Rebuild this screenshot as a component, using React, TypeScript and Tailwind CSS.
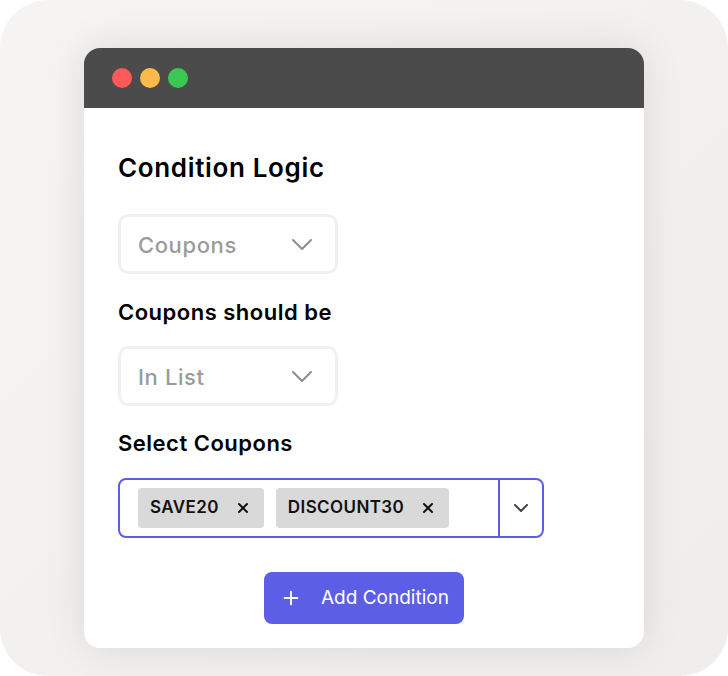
import { X, Plus } from "lucide-react";

// ─── Chevron drawn to the reference's proportions ─────────────────────────────

const Chevron = ({ w, h, className }: { w: number; h: number; className?: string }) => (
    <svg width={w} height={h} viewBox={`0 0 ${w} ${h}`} fill="none" className={className}>
        <polyline
            points={`1,1 ${w / 2},${h - 1} ${w - 1},1`}
            stroke="currentColor"
            strokeWidth={2}
            strokeLinecap="round"
            strokeLinejoin="round"
        />
    </svg>
);

// ─── Single select ────────────────────────────────────────────────────────────

const FakeSelect = ({ value }: { value: string }) => (
    <div className="flex items-center justify-between w-[220px] h-[60px] pl-[17px] pr-[23px] border-[3px] border-[#eff0f6] rounded-[10px] bg-white">
        <span className="text-[22px] text-[#9b9b9b] font-medium tracking-[0.6px] pt-[3px]">{value}</span>
        <Chevron w={20} h={11} className="text-[#8e8e8e]" />
    </div>
);

const Chip = ({ label }: { label: string }) => (
    <div className="flex items-center h-[40px] pl-[12px] pr-[13px] rounded-[4px] bg-[#d9d9d9]">
        <span className="text-[17px] font-semibold text-[#111] tracking-[0.4px]">{label}</span>
        <X className="w-[16px] h-[16px] ml-[16px] text-[#111]" strokeWidth={3} />
    </div>
);

// ─── Component ────────────────────────────────────────────────────────────────

export default function App() {
    return (
        <div className="w-[728px] h-[676px] bg-white" style={{ fontFamily: "Inter, 'Noto Sans', sans-serif" }}>
            <div className="w-full h-full rounded-[48px] bg-gradient-to-br from-[#f5f4f2] to-[#efeeec] pt-[48px] pl-[84px]">
                <div className="w-[560px] h-[600px] rounded-[16px] bg-white overflow-hidden shadow-[0_0_40px_rgba(0,0,0,0.10)]">
                    <div className="h-[60px] bg-[#4b4b4b] flex items-center gap-[8px] pl-[28px]">
                        <span className="w-[20px] h-[20px] rounded-full bg-[#fe5a5b]" />
                        <span className="w-[20px] h-[20px] rounded-full bg-[#fcbb49]" />
                        <span className="w-[20px] h-[20px] rounded-full bg-[#3bc754]" />
                    </div>

                    <div className="flex flex-col px-[34px] pt-[44px]">
                        <h1 className="text-[26px] leading-[32px] font-semibold text-black tracking-[0.65px]">Condition Logic</h1>

                        <div className="mt-[30px]">
                            <FakeSelect value="Coupons" />
                        </div>

                        <label className="mt-[24px] text-[22px] leading-[28px] font-semibold text-black tracking-[0.5px]">
                            Coupons should be
                        </label>

                        <div className="mt-[20px]">
                            <FakeSelect value="In List" />
                        </div>

                        <label className="mt-[23px] text-[22px] leading-[28px] font-semibold text-black tracking-[0.5px]">
                            Select Coupons
                        </label>

                        <div className="mt-[21px] flex w-[426px] h-[60px] border-2 border-[#5c5ee6] rounded-[8px]">
                            <div className="flex-1 flex items-center gap-[12px] pl-[18px]">
                                <Chip label="SAVE20" />
                                <Chip label="DISCOUNT30" />
                            </div>
                            <div className="w-[44px] border-l-2 border-[#5c5ee6] flex items-center justify-center">
                                <Chevron w={14} h={8} className="text-[#444]" />
                            </div>
                        </div>

                        <div className="mt-[34px] flex justify-center">
                            <button className="flex items-center w-[200px] h-[52px] rounded-[8px] bg-[#5c5ee6] text-white pl-[16px]">
                                <Plus className="w-[22px] h-[22px]" strokeWidth={2} />
                                <span className="ml-[19px] text-[19px]">Add Condition</span>
                            </button>
                        </div>
                    </div>
                </div>
            </div>
        </div>
    );
}
